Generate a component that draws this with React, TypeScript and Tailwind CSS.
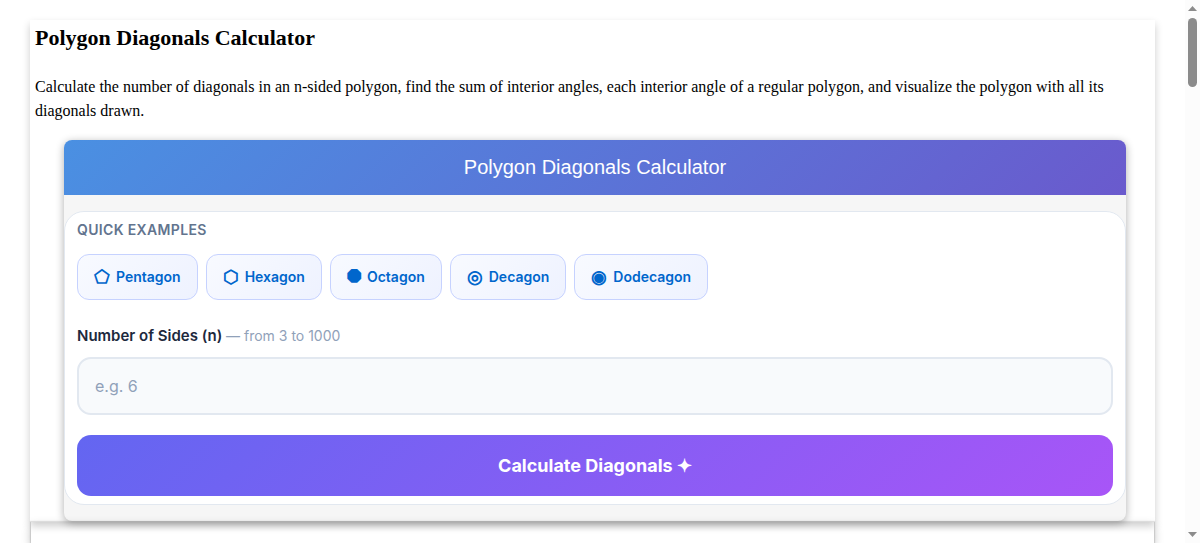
// App.tsx
// Polygon diagonals calculator page: intro text, the calculator widget
// and the start of the section that follows it.
import { useState } from 'react';

type Example = { name: string; sides: number; glyph: string };

const EXAMPLES: Example[] = [
  { name: 'Pentagon', sides: 5, glyph: '⬠' },
  { name: 'Hexagon', sides: 6, glyph: '⬡' },
  { name: 'Octagon', sides: 8, glyph: '⯃' },
  { name: 'Decagon', sides: 10, glyph: '◎' },
  { name: 'Dodecagon', sides: 12, glyph: '◉' },
];

function Calculator(): React.JSX.Element {
  const [sides, setSides] = useState('');

  return (
    <section className="mr-[29px] ml-[34px] overflow-hidden rounded-lg bg-[#f6f6f6] pb-4 shadow-[0_2px_8px_rgba(0,0,0,0.32)]">
      <h2 className="mb-4 bg-linear-[135deg,#4a90e2,#6a5acd] py-3 text-center font-['Liberation_Sans',sans-serif] text-xl leading-[31px] text-white">
        Polygon Diagonals Calculator
      </h2>

      <form
        className="rounded-[20px] border border-slate-200 bg-white px-3 pt-2 pb-2 font-[Inter,sans-serif]"
        onSubmit={(e) => e.preventDefault()}
      >
        {/* ---- Presets ---- */}
        <p className="text-sm leading-5 font-semibold tracking-wide text-slate-500 uppercase">
          Quick Examples
        </p>
        <div className="mt-[14px] flex flex-wrap gap-2">
          {EXAMPLES.map((ex) => (
            <button
              key={ex.name}
              type="button"
              onClick={() => setSides(String(ex.sides))}
              className="flex h-[46px] items-center gap-[6px] rounded-xl border border-indigo-200 bg-linear-[135deg,#f8faff,#eef2ff] px-4 text-sm font-semibold text-[#0066cc]"
            >
              <span className="text-lg leading-5">{ex.glyph}</span>
              {ex.name}
            </button>
          ))}
        </div>

        {/* ---- Input ---- */}
        <label htmlFor="sides" className="mt-6 block text-[15px] leading-6 font-semibold text-slate-800">
          Number of Sides (n){' '}
          <span className="text-sm font-normal text-slate-400">— from 3 to 1000</span>
        </label>
        <input
          id="sides"
          inputMode="numeric"
          value={sides}
          onChange={(e) => setSides(e.target.value)}
          placeholder="e.g. 6"
          className="mt-[9px] block h-[58px] w-full rounded-[14px] border-2 border-slate-200 bg-slate-50 px-4 text-base text-slate-800 placeholder:text-slate-400"
        />

        <button
          type="submit"
          className="mt-5 h-[61px] w-full rounded-[14px] bg-linear-[135deg,#6366f1,#a855f7] text-lg font-bold text-white"
        >
          Calculate Diagonals ✦
        </button>
      </form>
    </section>
  );
}

// Thin vertical scroll track at the right edge of the window
function ScrollTrack(): React.JSX.Element {
  return (
    <div className="flex w-[15px] shrink-0 flex-col items-center bg-[#fcfcfc] py-[6px]" aria-hidden="true">
      <svg className="h-[5px] w-[9px] fill-[#8b8b8b]" viewBox="0 0 9 5">
        <path d="M4.5 0L9 5H0z" />
      </svg>
      <div className="mt-[7px] h-[69px] w-[9px] rounded-full bg-[#8b8b8b]" />
      <svg className="mt-auto h-[5px] w-[9px] fill-[#8b8b8b]" viewBox="0 0 9 5">
        <path d="M0 0h9L4.5 5z" />
      </svg>
    </div>
  );
}

function App(): React.JSX.Element {
  return (
    <div className="flex h-screen overflow-hidden bg-white font-['Liberation_Serif',serif] text-black">
      <main className="flex min-w-0 flex-1 flex-col px-[30px] pt-5">
        <article className="shrink-0 pb-px shadow-[0_4px_8px_rgba(0,0,0,0.2)]">
          <div className="px-[5px]">
            <h1 className="text-[22px] leading-9 font-bold">Polygon Diagonals Calculator</h1>
            <p className="mt-[19px] mb-[17px] text-base leading-6">
              Calculate the number of diagonals in an n-sided polygon, find the sum of interior angles, each
              interior angle of a regular polygon, and visualize the polygon with all its diagonals drawn.
            </p>
          </div>
          <Calculator />
        </article>
        <section className="mx-px flex-1 shadow-[0_0_1px_1px_rgba(0,0,0,0.1),0_4px_10px_rgba(0,0,0,0.25)]" />
      </main>
      <ScrollTrack />
    </div>
  );
}

export default App;
